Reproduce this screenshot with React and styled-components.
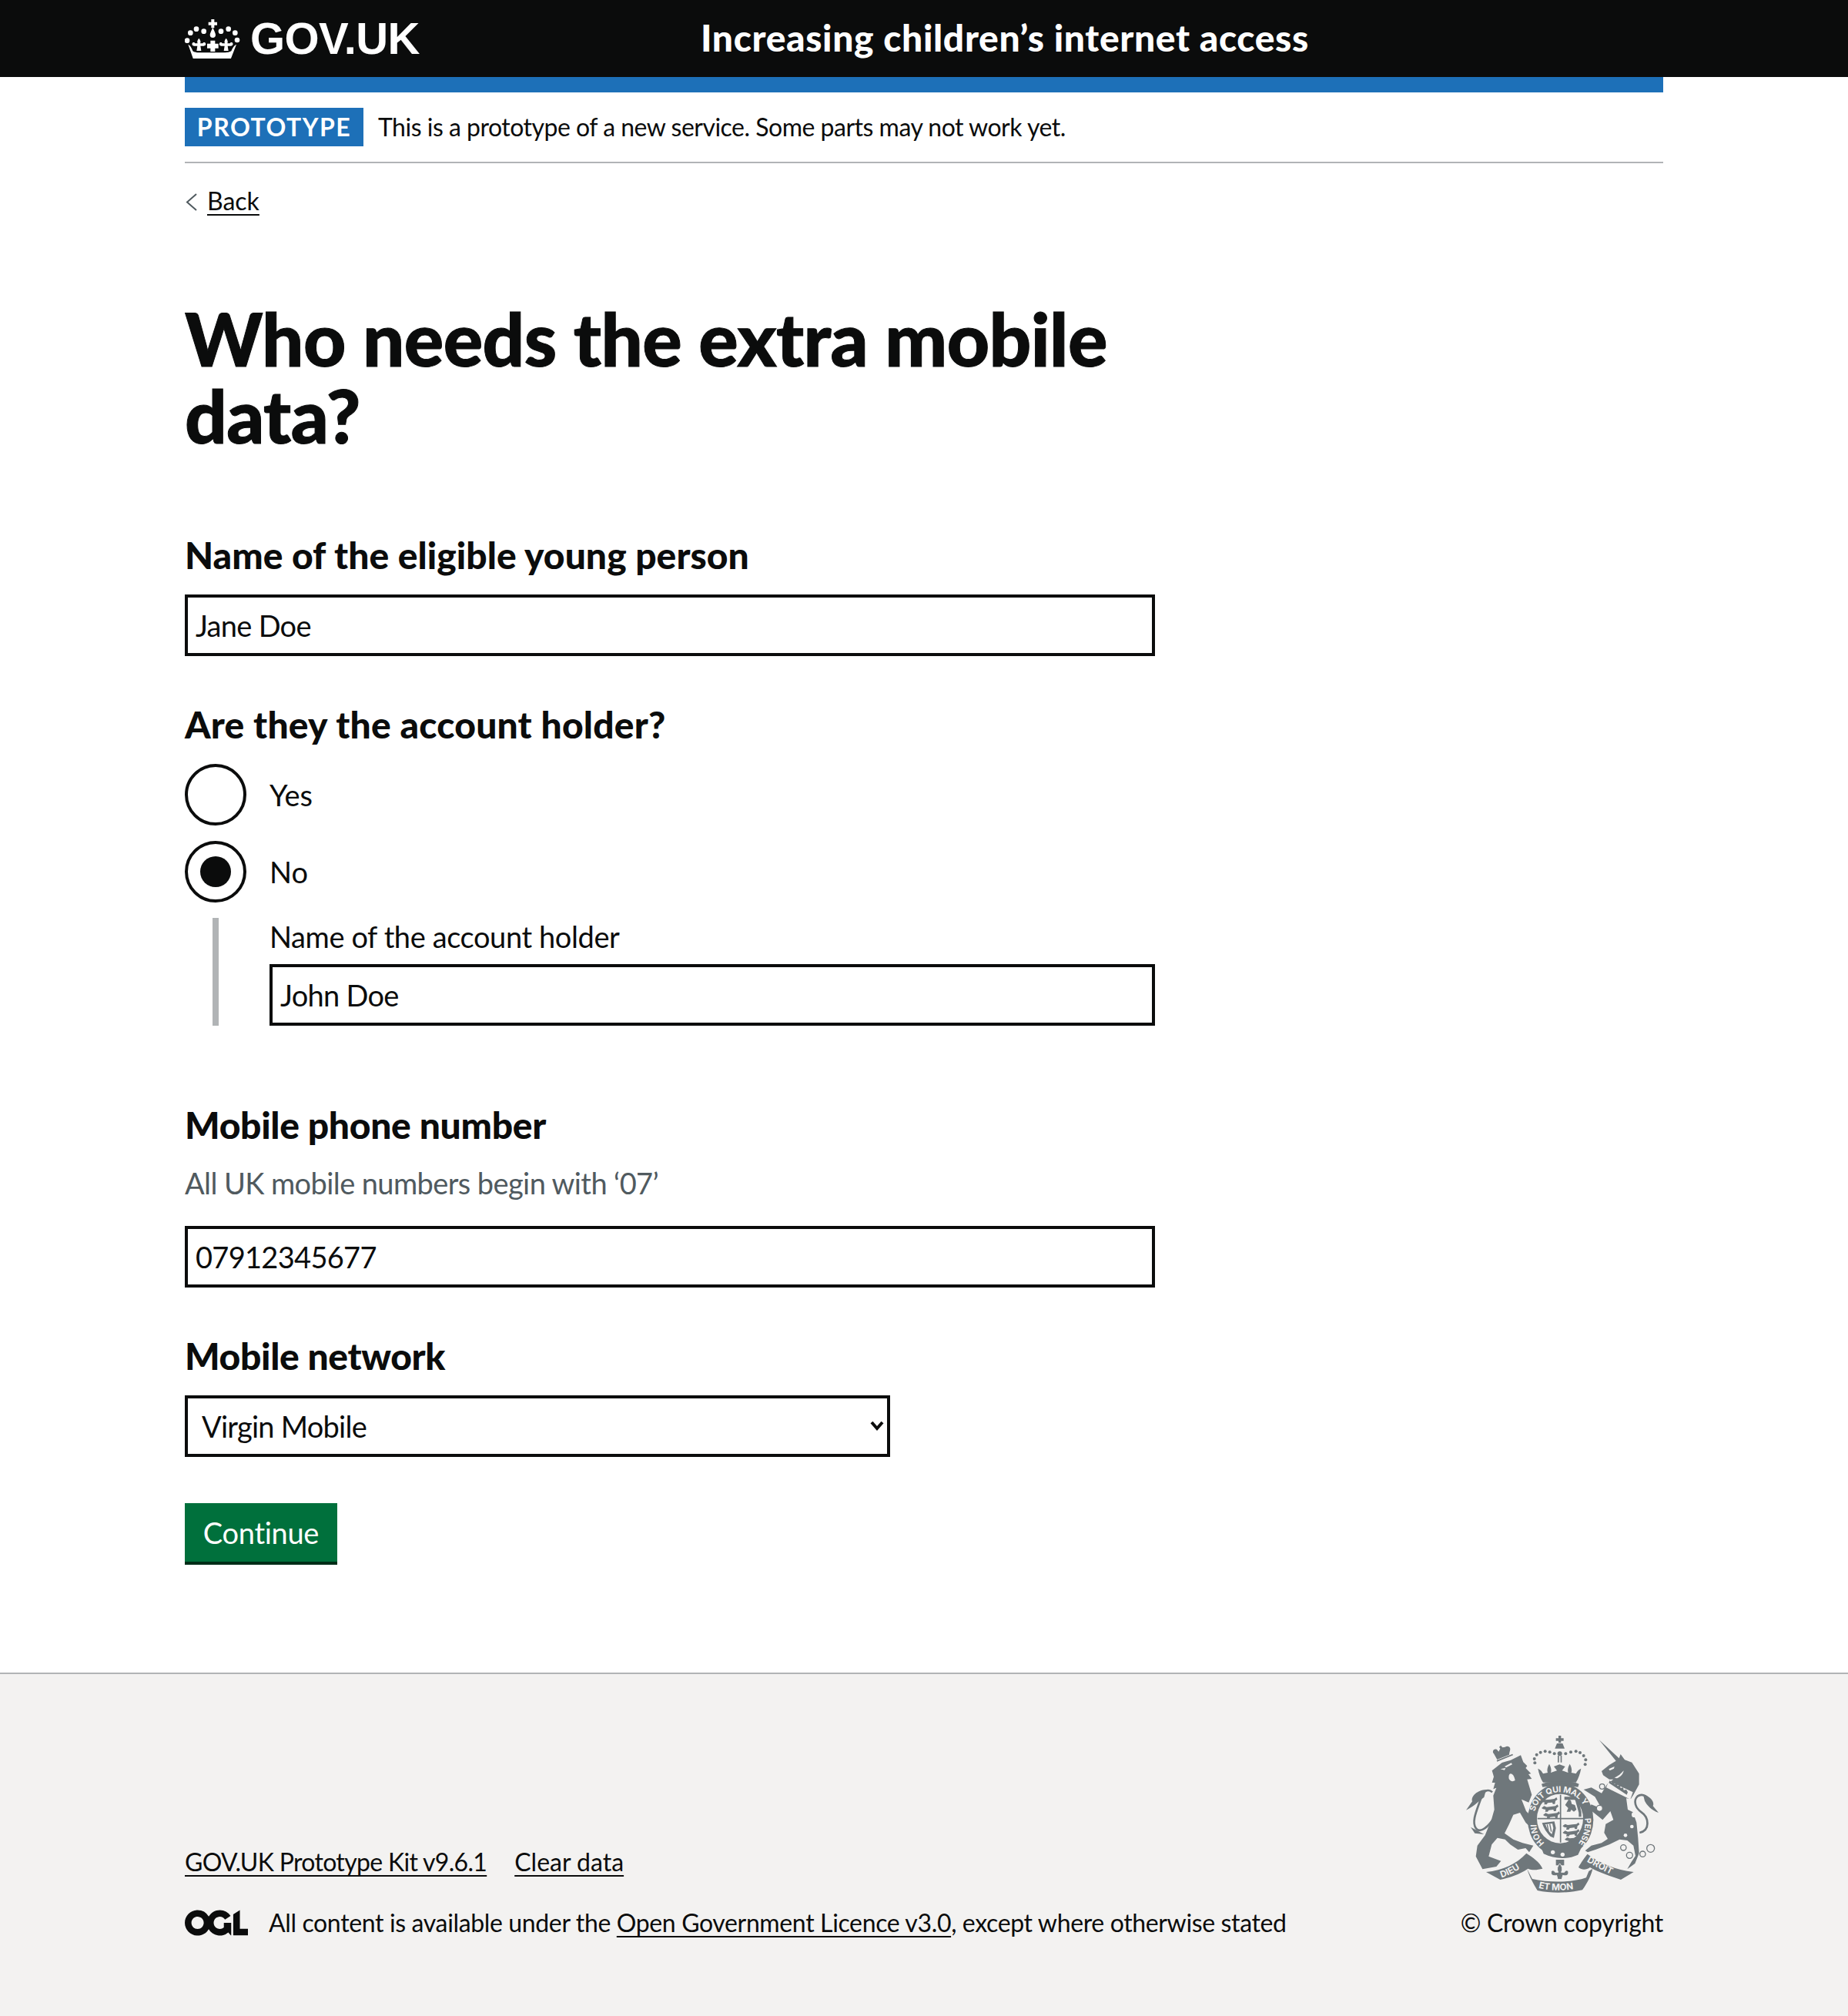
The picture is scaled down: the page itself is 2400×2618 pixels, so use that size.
import React from "react";
import styled, { createGlobalStyle } from "styled-components";

const font = `Lato, "Noto Sans", Arial, sans-serif`;
const black = "#0b0c0c";
const crestGrey = "#6f777b";
const footerBg = "#f3f2f1";

const Global = createGlobalStyle`
  html, body { margin: 0; padding: 0; background: #fff; }
  body { font-family: ${font}; color: ${black}; }
  * { box-sizing: border-box; }
`;

const Page = styled.div`
  min-height: 2618px;
  display: flex;
  flex-direction: column;
`;

const Header = styled.header`
  background: ${black};
  height: 100px;
`;

const Container = styled.div`
  width: 1920px;
  margin: 0 auto;
`;

const HeaderInner = styled(Container)`
  display: flex;
  align-items: center;
  height: 100px;
`;

const Logo = styled.a`
  width: 670px;
  display: flex;
  align-items: center;
  gap: 13px;
  color: #fff;
  font-family: "Liberation Sans", Arial, sans-serif;
  font-weight: 700;
  font-size: 58px;
  letter-spacing: -0.6px;
  line-height: 100px;
`;

const ServiceName = styled.a`
  color: #fff;
  font-size: 48px;
  font-weight: 900;
  letter-spacing: 0.63px;
  line-height: 98px;
  padding-bottom: 2px;
`;

const BlueBar = styled.div`
  height: 20px;
  background: #1d70b8;
`;

const PhaseBanner = styled.div`
  display: flex;
  align-items: center;
  gap: 19px;
  padding: 20px 0;
  border-bottom: 2px solid #b1b4b6;
  font-size: 32px;
  letter-spacing: -0.5px;
  span { padding-bottom: 2px; }
`;

const Tag = styled.strong`
  display: block;
  width: 232px;
  height: 50px;
  background: #1d70b8;
  color: #fff;
  font-size: 32px;
  font-weight: 700;
  line-height: 50px;
  letter-spacing: 1.5px;
  text-align: center;
`;

const BackLink = styled.a`
  display: flex;
  align-items: center;
  gap: 12px;
  margin-top: 30px;
  height: 40px;
  font-size: 32px;
  span { padding-bottom: 3px; text-decoration: underline; text-underline-offset: 5px; text-decoration-thickness: 2px; }
`;

const Heading = styled.h1`
  margin: 107px 0 0;
  width: 1260px;
  font-size: 96px;
  line-height: 100px;
  font-weight: 900;
  letter-spacing: -0.6px;
  -webkit-text-stroke: 1px ${black};
`;

const BoldLabel = styled.label`
  display: block;
  margin-top: ${(p) => p.$top}px;
  padding-bottom: 2px;
  font-size: 48px;
  line-height: 48px;
  font-weight: 900;
  letter-spacing: ${(p) => p.$spacing || 0}px;
`;

const Hint = styled.div`
  margin-top: 25px;
  padding-bottom: 2px;
  font-size: 38px;
  line-height: 48px;
  color: #505a5f;
  letter-spacing: -0.6px;
`;

const TextInput = styled.input`
  display: block;
  width: ${(p) => p.$width}px;
  height: 80px;
  margin-top: ${(p) => p.$top}px;
  padding: 10px;
  border: 4px solid ${black};
  border-radius: 0;
  background: #fff;
  color: ${black};
  font-family: ${font};
  font-size: 38px;
  letter-spacing: -0.7px;
  outline: none;
`;

const RadioGroup = styled.div`
  display: flex;
  flex-direction: column;
  gap: 20px;
  margin-top: 25px;
`;

const RadioRow = styled.label`
  display: flex;
  align-items: center;
  gap: 30px;
  height: 80px;
  font-size: 38px;
`;

const RadioMark = styled.span`
  position: relative;
  width: 80px;
  height: 80px;
  border: 4px solid ${black};
  border-radius: 50%;
  background: #fff;
  &::after {
    content: "";
    display: ${(p) => (p.$checked ? "block" : "none")};
    position: absolute;
    inset: 16px;
    border-radius: 50%;
    background: ${black};
  }
`;

const Conditional = styled.div`
  margin-left: 36px;
  padding-left: 66px;
  border-left: 8px solid #b1b4b6;
  height: 140px;
`;

const CondLabel = styled.label`
  display: block;
  padding-bottom: 2px;
  font-size: 38px;
  line-height: 48px;
  letter-spacing: -0.4px;
`;

const SelectWrap = styled.div`
  position: relative;
  width: 916px;
  margin-top: 25px;
  svg {
    position: absolute;
    right: 8px;
    top: 33px;
    pointer-events: none;
  }
`;

const Select = styled.select`
  display: block;
  width: 100%;
  height: 80px;
  padding: 10px 40px 10px 18px;
  appearance: none;
  border: 4px solid ${black};
  border-radius: 0;
  background: #fff;
  color: ${black};
  font-family: ${font};
  font-size: 38px;
  letter-spacing: -0.75px;
  outline: none;
`;

const Button = styled.button`
  display: block;
  width: 198px;
  height: 80px;
  margin: 60px 0 140px;
  padding: 0 0 4px;
  border: 0;
  background: #00703c;
  box-shadow: inset 0 -4px 0 #002d18;
  color: #fff;
  font-family: ${font};
  font-size: 38px;
  letter-spacing: -0.3px;
`;

const Footer = styled.footer`
  flex: 1;
  background: ${footerBg};
  border-top: 2px solid #b1b4b6;
  padding: 71px 0 101px;
`;

const FooterInner = styled(Container)`
  display: flex;
  justify-content: space-between;
  align-items: flex-end;
  font-size: 32px;
  line-height: 40px;
`;

const FooterLinks = styled.div`
  display: flex;
  gap: 36px;
  margin-bottom: 39px;
`;

const Link = styled.a`
  letter-spacing: ${(p) => (p.$spacing ? `${p.$spacing}px` : "inherit")};
  text-decoration: underline;
  text-underline-offset: 5px;
  text-decoration-thickness: 2px;
`;

const LicenceRow = styled.div`
  display: flex;
  align-items: center;
  gap: 27px;
  letter-spacing: -0.36px;
`;

const CrestColumn = styled.div`
  display: flex;
  flex-direction: column;
  align-items: flex-end;
  gap: 12px;
  letter-spacing: -0.3px;
`;

function Crown() {
  const dots = [[24, 103], [37, 73], [60, 58], [89, 67], [156, 67], [185, 58], [211, 73], [219, 101]];
  const fleurs = [70, 176];
  return (
    <svg width="72" height="51" viewBox="15 20 216 153" fill="#fff" style={{ flex: "none" }}>
      {dots.map(([x, y]) => <circle key={x} cx={x} cy={y} r="10" />)}
      <path d="M118 20h12v11h11v12h-11v11h-12V43h-11V31h11z" />
      <path d="M124 52c5 12 11 22 11 29a11 11 0 0 1-22 0c0-7 6-17 11-29z" />
      {fleurs.map((x) => (
        <path key={x} d={`M${x} 94c6 8 8 13 5 20h10c2-5 9-5 11 0s-1 10-7 10h-13l3 19h-18l3-19h-13c-6 0-9-5-7-10s9-5 11 0h10c-3-7-1-12 5-20z`} />
      ))}
      <path d="M115 103h18v12h13v18h-13v13h-18v-13h-13v-18h13z" />
      <path d="M28 118c8 4 14 14 18 26 5 4 14 6 26 6h100c10 0 18-2 24-6 5-12 11-22 20-26l-22 57H48z" />
    </svg>
  );
}

function Ogl() {
  return (
    <svg width="82" height="34" viewBox="0 0 483.2 195.7" fill={black}>
      <path d="M421.5 142.8V.1l-50.7 32.3v161.1h112.4v-50.7zm-122.3-9.6A47.12 47.12 0 0 1 221 97.8c0-26 21.1-47.1 47.1-47.1 16.7 0 31.4 8.7 39.7 21.8l42.7-27.2A97.63 97.63 0 0 0 268.1 0c-36.5 0-68.3 20.1-85.1 49.7A97.76 97.76 0 0 0 97.8 0C43.9 0 0 43.9 0 97.8s43.9 97.8 97.8 97.8c36.5 0 68.3-20.1 85.1-49.7a97.76 97.76 0 0 0 149.6 25.4l19.4 22.2h3.1V97.8h-56.1v35.4zM97.8 145c-26 0-47.1-21.1-47.1-47.1s21.1-47.1 47.1-47.1 47.2 21 47.2 47S123.8 145 97.8 145" />
    </svg>
  );
}

function Chevron() {
  return (
    <svg width="17" height="23" viewBox="0 0 17 23" fill="none" stroke="#505a5f" strokeWidth="2">
      <path d="M15 1 3 11.5 15 22" />
    </svg>
  );
}

function SelectArrow() {
  return (
    <svg width="18" height="14" viewBox="0 0 18 14" fill="none" stroke={black} strokeWidth="4">
      <path d="M2 2l7 8 7-8" />
    </svg>
  );
}

// coordinates are those of the reference crop x 1850 y 2220, times 3
function RoyalArms() {
  const crownDots = [[430, 208], [428, 192], [437, 176], [452, 167], [470, 163], [488, 166], [506, 172], [550, 172], [570, 166], [590, 163], [606, 168], [620, 180], [628, 196], [626, 214]];
  const bodyHoles = [[817, 410, 10], [808, 456, 7], [783, 490, 7]];
  const rings = [[775, 538, 11], [799, 568, 12], [850, 563, 11], [881, 541, 15], [692, 300, 10], [682, 385, 12]];
  const lionRows = [[452, 350], [456, 378], [462, 405], [538, 448], [538, 474], [546, 500]];
  return (
    <svg width="270" height="220" viewBox="120 75 810 660" fill={crestGrey}>
      <defs>
        <path id="garterTop" d="M430 398C440 350 480 322 528 322S618 350 630 400" />
        <path id="garterRight" d="M624 424C630 465 616 505 590 535" />
        <path id="garterLeft" d="M468 520C445 500 435 470 437 445" />
        <path id="ribbonLeft" d="M300 655C335 645 372 622 402 598" />
        <path id="ribbonMid" d="M440 694C490 708 565 708 618 690" />
        <path id="ribbonRight" d="M632 592C670 615 720 640 764 660" />
      </defs>

      {/* lion crown */}
      <path d="M283 195 270 172c-8-8 0-22 12-16l7 8 6-12-4-6 6-6 7 8 10-2c8-6 20-2 20 8 0 8-4 12-4 22z" />
      <path d="M283 203 345 178l-2-5-62 25z" />
      {/* lion */}
      <path d="M263 238 302 207 336 197 375 178 385 205 400 220 394 228 415 250 405 252 418 270 400 272 418 332 406 362 378 350 396 396 420 420 436 454 414 460 394 440 372 402 346 410 330 446 312 482 346 506 382 520 424 530 408 556 394 540 364 546 334 526 314 506 284 500 262 526 250 572 298 590 280 612 226 622 200 572 206 530 236 490 262 425 272 390 268 335 280 305 268 310 275 285 263 285 270 262z" />
      <path d="M335 250c8 0 14 8 18 26-8 6-20 4-24-6-2-10 0-18 6-20z" fill={footerBg} />
      <path d="M312 222 338 208 342 214 318 226z M296 232 316 228 312 236z" fill={footerBg} />
      <path d="M266 430C236 470 212 480 200 462 182 436 205 390 222 340 232 312 252 310 264 322" fill="none" stroke={crestGrey} strokeWidth="8" />
      <path d="M240 312C205 314 180 338 186 358L162 392C196 376 216 352 232 342z" />
      <path d="M180 458 232 486 196 482z" />

      {/* unicorn */}
      <path d="M680 118 758 190 764 174 780 196 808 206 836 250 836 292 814 332 804 348 786 346 792 390 812 400 826 440 832 500 836 560 820 600 790 622 806 594 822 570 814 530 790 510 760 506 720 526 666 546 636 556 626 550 650 530 690 520 714 504 700 480 706 446 736 430 724 396 694 430 640 386 650 370 690 386 664 340 620 312 650 304 690 326 712 290 736 272 720 272 696 256 690 240 720 216 746 200z" />
      <path d="M718 278 812 322 802 350 708 304z" fill={footerBg} />
      <path d="M718 286l4-10 6 8 8-4 4 10 10-2 2 10 10-2 2 10 10-2 2 10 10-2 6 10-4 10z" />
      <path d="M776 238c-2 14-12 24-26 30l-10-2c14-6 26-16 36-28z" fill={footerBg} />
      <path d="M718 232 740 222 738 230 722 238z" fill={footerBg} />
      <path d="M838 480C880 470 875 420 845 400 822 384 812 356 830 338 846 326 866 336 876 352" fill="none" stroke={crestGrey} strokeWidth="8" />
      <path d="M852 332C880 336 898 362 890 376L912 402C884 392 866 372 858 356z" />
      {bodyHoles.map(([x, y, r]) => <circle key={y} cx={x} cy={y} r={r} fill={footerBg} />)}
      {rings.map(([x, y, r]) => <circle key={y} cx={x} cy={y} r={r} fill={footerBg} stroke={crestGrey} strokeWidth="4" />)}

      {/* main crown */}
      <path d="M512 112h10V102h10v10h10v10h-10v8h-10v-8h-10z" />
      <path d="M516 132h22l8 20h-38z" />
      <path d="M519 180h5v26h-5z M530 180h5v26h-5z" />
      {crownDots.map(([x, y]) => <circle key={`${x}-${y}`} cx={x} cy={y} r="6" />)}
      <circle cx="527" cy="172" r="9" />
      <path d="M442 230c10 4 16 12 20 20l18-4c-4-10 0-24 6-34 6 10 10 24 6 34l24-8-12-16 22-8 22 8-12 16 24 8c-4-10 0-24 6-34 6 10 10 24 6 34l18 4c4-8 10-16 20-20-4 20-10 38-20 54H462c-10-16-16-34-20-54z" />
      <path d="M456 290c30-14 116-14 146 0l-4 12c-44-8-94-8-138 0z" />

      {/* shield and garter */}
      <ellipse cx="530" cy="430" rx="128" ry="142" />
      <ellipse cx="528" cy="425" rx="90" ry="96" fill={footerBg} />
      <path d="M440 425h178M530 332v186" stroke={crestGrey} strokeWidth="5" fill="none" />
      {lionRows.map(([x, y]) => (
        <path key={y} d={`M${x} ${y + 6}l10-8 10 4 18-2 16-2 8-6 4 8-8 6-2 12-8 0-2-6-18 2-4 6-10 0 2-8-10-2z`} />
      ))}
      <path d="M548 372l14-22 8 4 4 14 12 4 6 18-10 8-10-8-4 8-14 0 6-14z" />
      <path d="M545 340h52l14 60v18h-10v-16l-14-50-42 0z" />
      <path d="M458 442l48-6 6 26-8 38-14-6c-14-14-26-32-32-52zm12 6c6 16 14 28 26 38l6-24-4-18z" />
      <path d="M478 448l6 34M488 446l6 30M470 450l8 22" stroke={crestGrey} strokeWidth="4" fill="none" />
      <path d="M452 530c40 30 110 30 160 6l-14 30c-40 18-90 18-134-4z" />
      <circle cx="500" cy="556" r="8" fill={footerBg} />
      <circle cx="538" cy="565" r="8" fill={footerBg} />
      <g fill={footerBg} fontFamily="Inter, sans-serif" fontWeight="700" fontSize="32">
        <text><textPath href="#garterTop">SOIT QUI MAL Y</textPath></text>
        <text><textPath href="#garterRight">PENSE</textPath></text>
        <text><textPath href="#garterLeft">HONI</textPath></text>
      </g>

      {/* motto */}
      <path d="M240 633C305 627 360 600 397 560 420 575 450 595 460 620 440 625 420 627 403 620 370 643 330 655 295 663z" />
      <path d="M400 622C408 650 425 680 440 705 495 717 565 715 615 703 635 675 650 645 655 620L640 630 630 655C575 675 485 675 420 660z" />
      <path d="M600 615C610 595 625 575 635 563 685 600 745 625 815 633L765 663C725 650 680 635 645 615 630 625 615 627 600 615z" />
      <g fill={footerBg} fontFamily="Inter, sans-serif" fontWeight="700" fontSize="35">
        <text><textPath href="#ribbonLeft">DIEU</textPath></text>
        <text><textPath href="#ribbonMid" startOffset="4">ET MON</textPath></text>
        <text><textPath href="#ribbonRight">DROIT</textPath></text>
      </g>

      {/* fleur */}
      <path d="M512 585h32v22h-32z" />
      <path d="M527 600c10 12 12 22 6 34h12c4-10 16-10 16 2 0 10-12 14-22 10l-4 16h-16l-4-16c-10 4-22 0-22-10 0-12 12-12 16-2h12c-6-12-4-22 6-34z" stroke={footerBg} strokeWidth="3" />
    </svg>
  );
}

export default function App() {
  return (
    <Page>
      <Global />
      <Header>
        <HeaderInner>
          <Logo>
            <Crown />
            GOV.UK
          </Logo>
          <ServiceName>Increasing children’s internet access</ServiceName>
        </HeaderInner>
      </Header>

      <Container>
        <BlueBar />
        <PhaseBanner>
          <Tag>PROTOTYPE</Tag>
          <span>This is a prototype of a new service. Some parts may not work yet.</span>
        </PhaseBanner>
        <BackLink>
          <Chevron />
          <span>Back</span>
        </BackLink>

        <Heading>Who needs the extra mobile data?</Heading>

        <BoldLabel $top={108} $spacing={0.05}>Name of the eligible young person</BoldLabel>
        <TextInput $top={25} $width={1260} defaultValue="Jane Doe" />

        <BoldLabel $top={65} $spacing={0.2}>Are they the account holder?</BoldLabel>
        <RadioGroup>
          <RadioRow><RadioMark />Yes</RadioRow>
          <RadioRow><RadioMark $checked />No</RadioRow>
          <Conditional>
            <CondLabel>Name of the account holder</CondLabel>
            <TextInput $top={10} $width={1150} defaultValue="John Doe" />
          </Conditional>
        </RadioGroup>

        <BoldLabel $top={105} $spacing={-0.3}>Mobile phone number</BoldLabel>
        <Hint>All UK mobile numbers begin with ‘07’</Hint>
        <TextInput $top={30} $width={1260} defaultValue="07912345677" />

        <BoldLabel $top={65} $spacing={-0.35}>Mobile network</BoldLabel>
        <SelectWrap>
          <Select defaultValue="Virgin Mobile">
            <option>Virgin Mobile</option>
          </Select>
          <SelectArrow />
        </SelectWrap>

        <Button>Continue</Button>
      </Container>

      <Footer>
        <FooterInner>
          <div>
            <FooterLinks>
              <Link $spacing={-0.68}>GOV.UK Prototype Kit v9.6.1</Link>
              <Link>Clear data</Link>
            </FooterLinks>
            <LicenceRow>
              <Ogl />
              <span>All content is available under the <Link>Open Government Licence v3.0</Link>, except where otherwise stated</span>
            </LicenceRow>
          </div>
          <CrestColumn>
            <RoyalArms />
            <span>© Crown copyright</span>
          </CrestColumn>
        </FooterInner>
      </Footer>
    </Page>
  );
}
